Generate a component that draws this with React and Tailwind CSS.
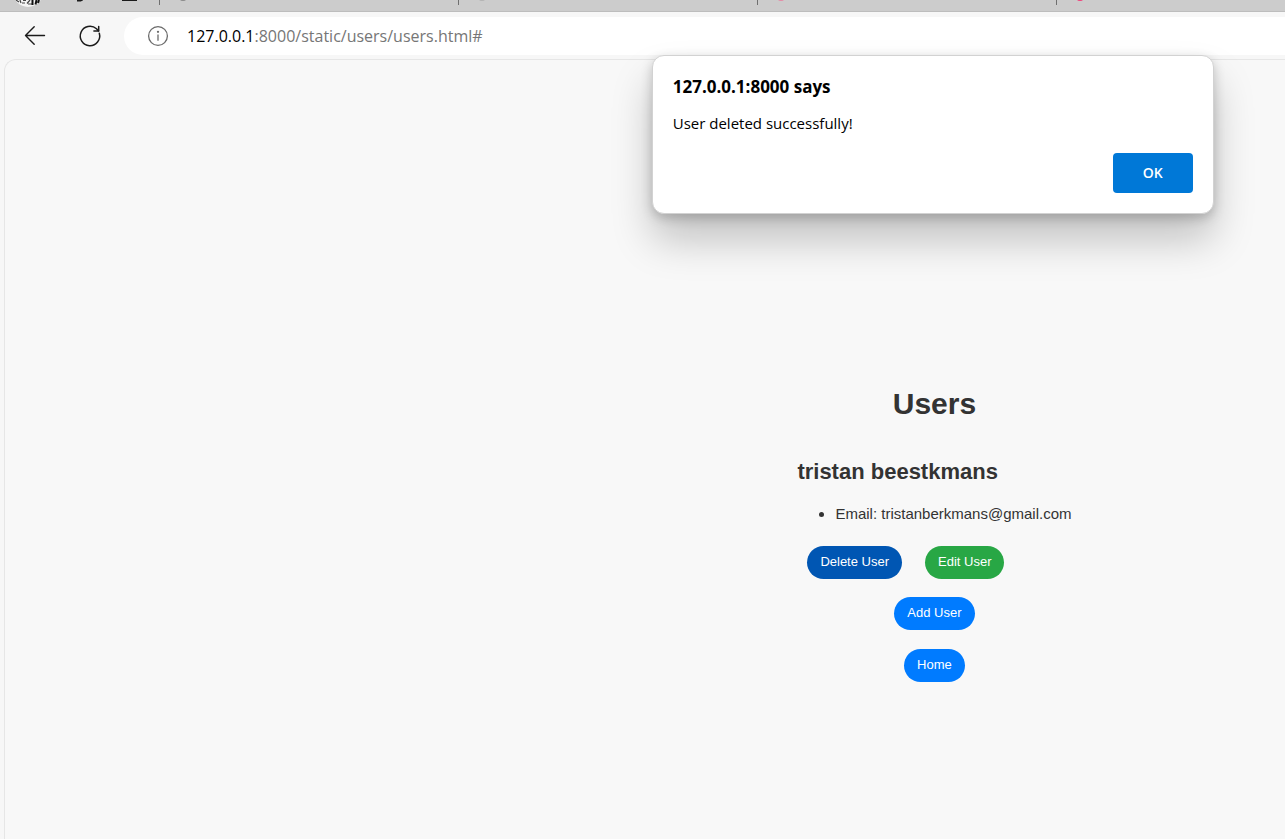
const TABS = ['#8a8a8a', '#b4b4b4', '#e58ba6', '#f0437c'];

function TabStrip() {
  return (
    <div className="flex h-3 shrink-0 overflow-hidden border-b border-[#bdbdbd] bg-[#cccccc]">
      <svg className="w-[159px] shrink-0" height="11" viewBox="0 0 159 11" aria-hidden="true">
        <circle cx="28" cy="-8" r="15" fill="#f4f4f4" />
        <path d="M16 0l3 2M20 0l1 3M22 3h3M23 0.500h3M27 3.500l3-3.500M28 4h4" stroke="#444" strokeWidth="1.200" fill="none" />
        <path d="M32.500 0v5M36.500 0l-1 4.500M39 0l-1 3" stroke="#111" strokeWidth="2" fill="none" />
        <path d="M77 0.500h3.500l2-1" stroke="#1b1b1b" strokeWidth="2" fill="none" />
        <path d="M122 0h15" stroke="#1b1b1b" strokeWidth="2" />
      </svg>
      {TABS.map((color) => (
        <div key={color} className="h-[5px] w-[299px] shrink-0 border-l border-[#6f6f6f]">
          <svg width="40" height="5" aria-hidden="true">
            <ellipse cx="23" cy="-0.500" rx="3" ry="1.500" fill={color} />
          </svg>
        </div>
      ))}
    </div>
  );
}

function Toolbar() {
  return (
    <header className="flex shrink-0 items-center pt-[5px] pb-1">
      <button type="button" aria-label="Back" className="ml-6 flex size-[22px] items-center justify-center">
        <svg width="22" height="22" viewBox="0 0 22 22" fill="none" stroke="#1b1b1b" strokeWidth="1.400" strokeLinecap="round" strokeLinejoin="round">
          <path d="M20.500 10.500H1.500M10.200 1.800L1.500 10.500l8.700 8.700" />
        </svg>
      </button>
      <button type="button" aria-label="Refresh" className="ml-8 flex size-6 items-center justify-center">
        <svg width="24" height="24" viewBox="0 0 24 24" fill="none" stroke="#1b1b1b" strokeWidth="1.500" strokeLinecap="round" strokeLinejoin="round">
          <path d="M21.300 9.300A9.700 9.700 0 1 1 18.500 4.800L20.600 7" />
          <path d="M20.700 2.500V7h-4.800" />
        </svg>
      </button>
      <div className="ml-[22px] flex h-[38px] flex-1 items-center gap-[18px] overflow-hidden rounded-l-full bg-white pl-[23px]">
        <svg className="shrink-0" width="22" height="22" viewBox="0 0 22 22" fill="none" stroke="#6b6b6b" strokeWidth="1.300">
          <circle cx="11" cy="11" r="9.400" />
          <path d="M11 9.500v6.200" />
          <circle cx="11" cy="6.800" r="0.500" fill="#6b6b6b" />
        </svg>
        <a href="#" className="font-['Open_Sans',sans-serif] text-[16px] leading-6 whitespace-nowrap text-[#767676]">
          <span className="text-black">127.0.0.1</span>:8000/static/users/users.html#
        </a>
      </div>
    </header>
  );
}

function PillButton({ color, children }) {
  return (
    <button type="button" className={`h-[33px] rounded-full px-[13px] pb-[2px] text-[13px] leading-4 text-white ${color}`}>
      {children}
    </button>
  );
}

function AlertDialog() {
  return (
    <div className="pointer-events-none absolute inset-x-0 -top-1 grid grid-cols-[5fr_6fr] pr-1">
      <div
        role="alertdialog"
        aria-labelledby="alert-title"
        aria-describedby="alert-text"
        className="pointer-events-auto col-start-2 flex w-[562px] flex-col justify-self-center rounded-xl border border-[#d2d2d2] bg-white p-5 pt-[19px] font-['Open_Sans',sans-serif] text-black shadow-[0_26px_40px_rgba(0,0,0,0.22),0_4px_12px_rgba(0,0,0,0.2)]"
      >
        <h2 id="alert-title" className="text-[17px] leading-6 font-bold">127.0.0.1:8000 says</h2>
        <p id="alert-text" className="mt-3 text-[15px] leading-6">User deleted successfully!</p>
        <button type="button" className="mt-[18px] h-10 w-20 self-end rounded bg-[#0078d7] text-[14px] leading-5 font-semibold text-white">
          OK
        </button>
      </div>
    </div>
  );
}

export default function App() {
  return (
    <div className="flex min-h-screen flex-col overflow-x-hidden bg-[#f7f7f7]">
      <TabStrip />
      <Toolbar />
      <div className="relative ml-1 flex flex-1 flex-col">
        <main className="grid flex-1 grid-cols-[5fr_6fr] rounded-tl-xl border-t border-l border-[#e6e6e6] bg-[#f8f8f8] pt-[326px] pr-[2px] pb-8 font-['Liberation_Sans',Arial,sans-serif] text-[15px] text-[#333333]">
          <div className="col-start-2 flex flex-col items-center">
            <h1 className="text-[30px] leading-9 font-bold">Users</h1>
            <section className="mt-8">
              <h2 className="text-[22px] leading-9 font-bold">tristan beestkmans</h2>
              <ul className="mt-3 list-disc pl-[38px]">
                <li className="leading-6">Email: tristanberkmans@gmail.com</li>
              </ul>
              <div className="mt-5 flex gap-[23px] pl-[10px]">
                <PillButton color="bg-[#0056b3]">Delete User</PillButton>
                <PillButton color="bg-[#28a745]">Edit User</PillButton>
              </div>
            </section>
            <div className="mt-[18px] flex flex-col items-center gap-[19px]">
              <PillButton color="bg-[#007bff]">Add User</PillButton>
              <PillButton color="bg-[#007bff]">Home</PillButton>
            </div>
          </div>
        </main>
        <AlertDialog />
      </div>
    </div>
  );
}
